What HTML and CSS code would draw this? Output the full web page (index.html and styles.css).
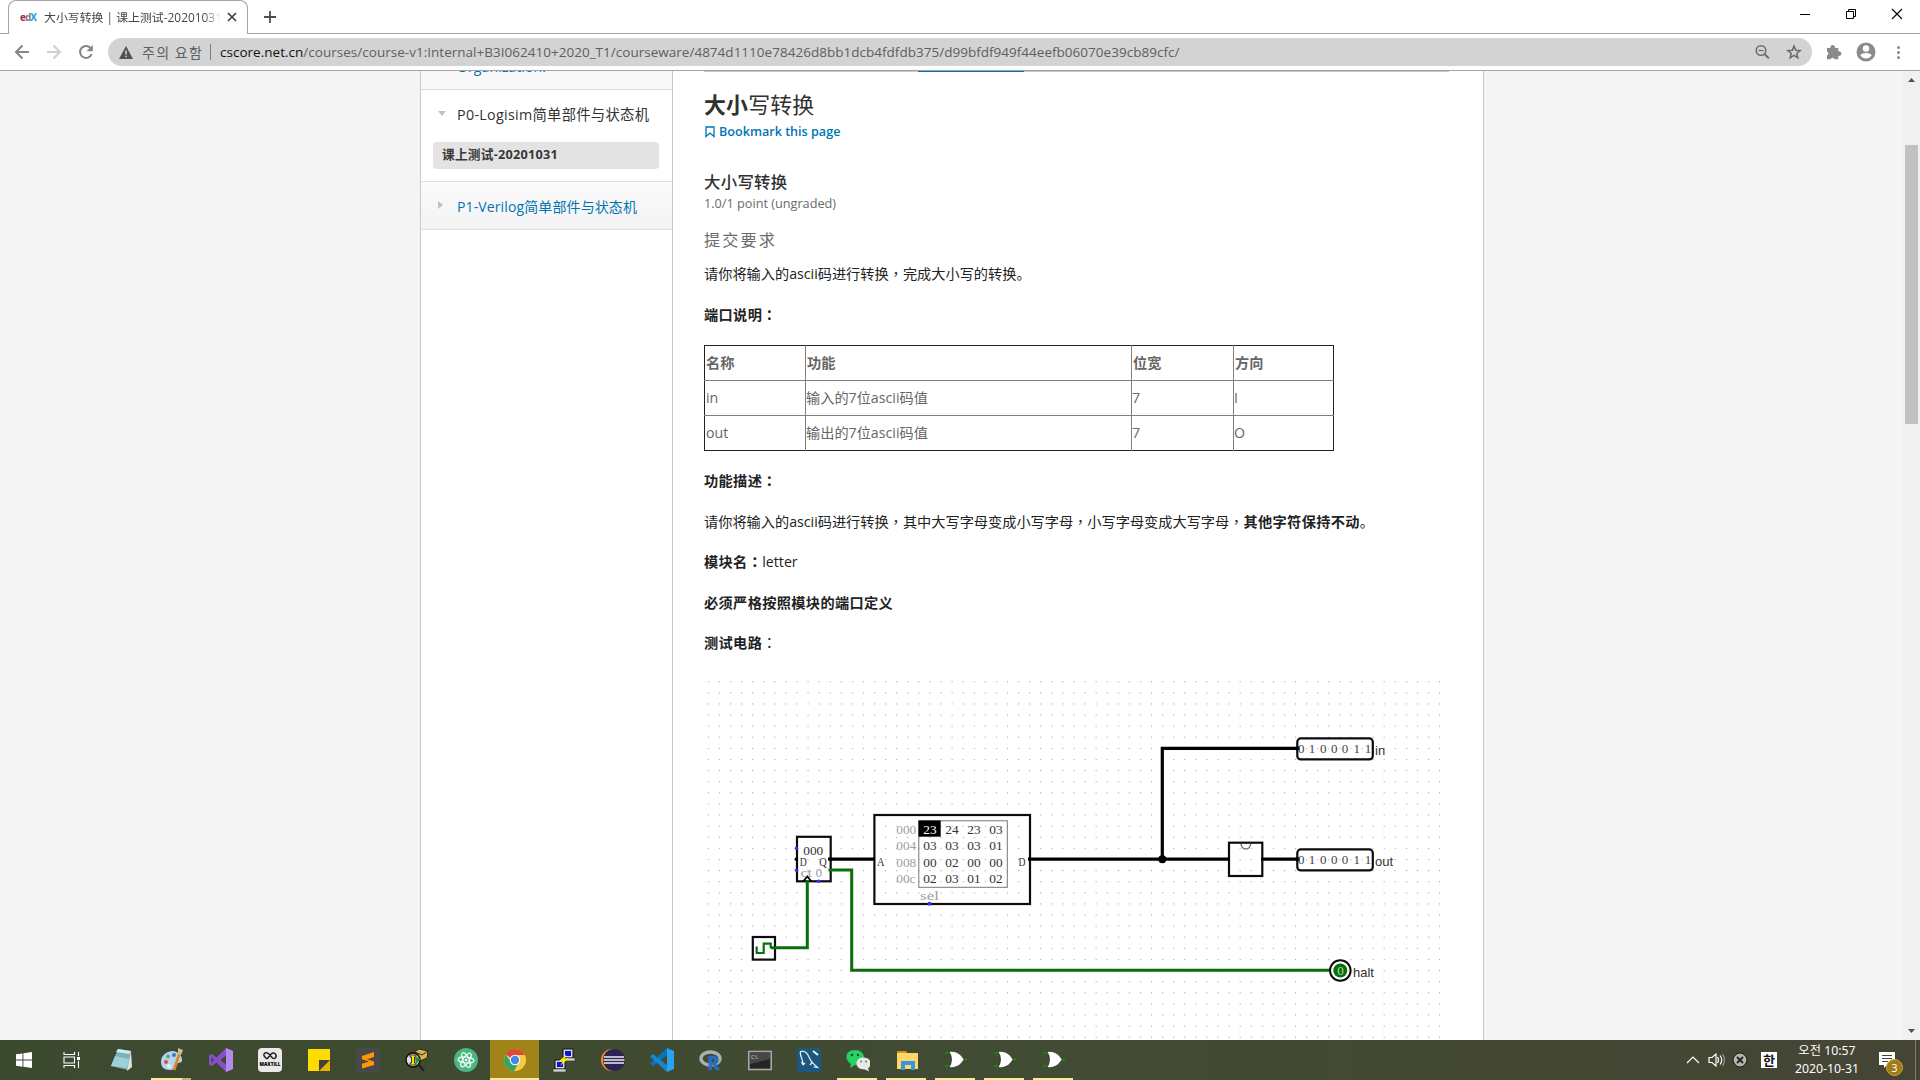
FILE: index.html
```html
<!DOCTYPE html>
<html lang="zh-CN">
<head>
<meta charset="utf-8">
<title>大小写转换 | 课上测试-20201031</title>
<link rel="stylesheet" href="styles.css">
</head>
<body>
<div class="screen">
<header class="tabstrip">
  <div class="tab">
    <div class="favicon"><b class="fe">e</b><b class="fd">d</b><b class="fx">X</b></div>
    <div class="tab-title">大小写转换 | 课上测试-20201031</div>
    <svg class="tab-close" width="10" height="10" viewBox="0 0 10 10"><path d="M1 1l8 8M9 1l-8 8" stroke="#3c4043" stroke-width="1.7"/></svg>
  </div>
  <svg class="newtab" width="14" height="14" viewBox="0 0 14 14"><path d="M7 1v12M1 7h12" stroke="#4c4f52" stroke-width="1.8"/></svg>
  <div class="winbtns">
    <svg width="46" height="28" viewBox="0 0 46 28"><path d="M18 14.5h10" stroke="#000"/></svg>
    <svg width="46" height="28" viewBox="0 0 46 28"><path d="M18.500 11.500h7v7h-7zM20.500 11v-1.500h7v7h-1.500" fill="none" stroke="#000"/></svg>
    <svg width="46" height="28" viewBox="0 0 46 28"><path d="M18 9l10 10M28 9l-10 10" stroke="#000" stroke-width="1.100"/></svg>
  </div>
</header>
<div class="toolbar">
  <svg class="nav" width="108" height="36" viewBox="0 0 108 36" fill="none" stroke-width="2">
    <path d="M29 18H16.500M22.500 11.500L16 18l6.500 6.500" stroke="#858585"/>
    <path d="M47 18h12.500M53.500 11.500L60 18l-6.500 6.500" stroke="#cfcfcf"/>
    <path d="M91 14.500A6 6 0 1 0 91.700 20" stroke="#858585"/><path d="M92.800 11v6.300h-6.300z" fill="#858585"/>
  </svg>
  <div class="omnibox">
    <svg class="warn" width="14" height="13" viewBox="0 0 14 13"><path d="M7 0l7 13H0z" fill="#4f5154"/><path d="M7 4.500v4M7 9.800v1.500" stroke="#d3d3d3" stroke-width="1.500"/></svg>
    <span class="insecure">주의 요함</span>
    <i class="sep"></i>
    <span class="url"><span class="host">cscore.net.cn</span>/courses/course-v1:Internal+B3I062410+2020_T1/courseware/4874d1110e78426d8bb1dcb4fdfdb375/d99bfdf949f44eefb06070e39cb89cfc/</span>
    <svg class="pillicons" width="60" height="28" viewBox="0 0 60 28" fill="none" stroke="#6b6b6b">
      <circle cx="9" cy="12.500" r="4.800" stroke-width="1.500"/><path d="M6.500 12.500h5" stroke-width="1.200"/><path d="M12.500 16l4.300 4.300" stroke-width="1.900"/>
      <path d="M42 8l1.700 4.200 4.500.3-3.500 2.900 1.200 4.400L42 17.400l-3.900 2.400 1.200-4.400-3.500-2.900 4.500-.3z" stroke-width="1.500"/>
    </svg>
  </div>
  <svg class="exticons" width="100" height="36" viewBox="0 0 100 36" fill="#8a8a8a">
    <path d="M15 14h3.500a2.300 2.300 0 1 1 4.300 0h3.500v3.500a2.300 2.300 0 1 1 0 4.300v3.500h-3.600a2.200 2.200 0 0 0-4.200 0H15v-3.700a2.200 2.200 0 0 0 0-4.100z"/>
    <path fill-rule="evenodd" d="M54 8.500a9.500 9.500 0 1 1 0 19a9.500 9.500 0 1 1 0-19zM54 11.300a3.200 3.200 0 1 0 0 6.400a3.200 3.200 0 1 0 0-6.400zM48.200 21.300c1.400 2 3.400 3.300 5.800 3.300s4.400-1.300 5.800-3.300c-.8-1.600-3.800-2.300-5.800-2.300s-5 .7-5.800 2.300z"/>
    <circle cx="86.500" cy="13.500" r="1.500"/><circle cx="86.500" cy="18.500" r="1.500"/><circle cx="86.500" cy="23.500" r="1.500"/>
  </svg>
</div>

<div class="viewport">
  <div class="page">
    <nav class="sidebar">
      <div class="chapter clipped"><span>Organization.</span></div>
      <div class="chapter open"><i class="arrow down"></i><span>P0-Logisim简单部件与状态机</span></div>
      <div class="section">课上测试-20201031</div>
      <div class="chapter closed"><i class="arrow right"></i><span>P1-Verilog简单部件与状态机</span></div>
    </nav>
    <main class="content">
      <div class="seqbar"><i></i></div>
      <h2><b>大小</b>写转换</h2>
      <div class="bookmark"><svg width="10" height="12" viewBox="0 0 10 12"><path d="M1 1h8v9.500L5 7 1 10.500z" fill="none" stroke="#0075b4" stroke-width="1.300"/></svg><span>Bookmark this page</span></div>
      <h3>大小写转换</h3>
      <div class="points">1.0/1 point (ungraded)</div>
      <h4>提交要求</h4>
      <p>请你将输入的ascii码进行转换<span class="pc" lang="zh-TW">，</span>完成大小写的转换。</p>
      <p><b>端口说明<span class="pc" lang="zh-TW">：</span></b></p>
      <table>
        <tr><th class="c1">名称</th><th class="c2">功能</th><th class="c3">位宽</th><th class="c4">方向</th></tr>
        <tr><td>in</td><td>输入的7位ascii码值</td><td>7</td><td>I</td></tr>
        <tr><td>out</td><td>输出的7位ascii码值</td><td>7</td><td>O</td></tr>
      </table>
      <p class="after-table"><b>功能描述<span class="pc" lang="zh-TW">：</span></b></p>
      <p>请你将输入的ascii码进行转换<span class="pc" lang="zh-TW">，</span>其中大写字母变成小写字母<span class="pc" lang="zh-TW">，</span>小写字母变成大写字母<span class="pc" lang="zh-TW">，</span><b>其他字符保持不动</b>。</p>
      <p><b>模块名<span class="pc" lang="zh-TW">：</span></b>letter</p>
      <p><b>必须严格按照模块的端口定义</b></p>
      <p><b>测试电路</b><span class="pc" lang="zh-TW">：</span></p>
      <svg class="circuit" width="740" height="368" viewBox="704 672 740 368">
        <defs><pattern id="grid" x="707.800" y="681.200" width="11.080" height="11.110" patternUnits="userSpaceOnUse"><rect width="1.100" height="1.100" fill="#a4a4a4"/></pattern></defs>
        <rect x="707" y="681" width="734" height="359" fill="url(#grid)"/>
        <g fill="none" stroke="#0c0c0e" stroke-width="2.200">
          <rect x="797" y="836.800" width="33.700" height="44.500"/>
          <rect x="752.800" y="937" width="22.200" height="22.600"/>
          <rect x="874.400" y="815" width="155.600" height="89"/>
          <rect x="1229" y="842.700" width="33.300" height="33.300"/>
          <rect x="1297.300" y="738.400" width="75.500" height="21" rx="3.500"/>
          <rect x="1297.300" y="849.400" width="75.500" height="21" rx="3.500"/>
        </g>
        <g fill="none" stroke="#000" stroke-width="3.200">
          <path d="M828 859.200h47"/><path d="M1028 859.200h202"/><path d="M1162.300 859.200V748.300H1298"/><path d="M1261 859.200h37"/>
        </g>
        <circle cx="1162.300" cy="859.200" r="4"/><circle cx="1297.500" cy="748.300" r="2.300"/><circle cx="1297.500" cy="859.200" r="2.300"/><circle cx="796.300" cy="859.300" r="1.700"/>
        <path d="M1241 844c1 6.500 8.700 6.500 9.700 0" fill="none" stroke="#777" stroke-width="1.500"/>
        <g fill="none" stroke="#0a6e0a" stroke-width="3">
          <path d="M770.700 947.700h36.600V880"/><path d="M828.500 870h23.200v100.200H1331"/>
          <path d="M756.700 946.500v6.500h7v-9.300h7v4.500" stroke-width="2.200"/>
        </g>
        <path d="M803.500 881l3.800-4.500 3.800 4.500" fill="none" stroke="#000" stroke-width="1.800"/>
        <g fill="#3030ff"><circle cx="796.500" cy="848.300" r="1.800"/><circle cx="796.500" cy="870.200" r="1.800"/><circle cx="818.700" cy="881.300" r="1.800"/><circle cx="929.500" cy="903.700" r="2"/></g>
        <rect x="918.800" y="820.800" width="88.500" height="66.500" fill="none" stroke="#777"/>
        <rect x="918.500" y="820.500" width="22.200" height="16.200"/>
        <g class="mono">
          <text x="803.300" y="854.700">000</text><text x="799.800" y="865.700" textLength="7" lengthAdjust="spacingAndGlyphs">D</text><text x="819.300" y="865.700" textLength="7.500" lengthAdjust="spacingAndGlyphs">Q</text>
          <text x="877" y="866.300" textLength="7.500" lengthAdjust="spacingAndGlyphs">A</text><text x="1018.600" y="866.300" textLength="7" lengthAdjust="spacingAndGlyphs">D</text>
          <text x="923.300" y="834" fill="#fff">23</text><text x="945.300" y="834">24</text><text x="967.300" y="834">23</text><text x="989.300" y="834">03</text>
          <text x="923.300" y="850.200">03</text><text x="945.300" y="850.200">03</text><text x="967.300" y="850.200">03</text><text x="989.300" y="850.200">01</text>
          <text x="923.300" y="866.600">00</text><text x="945.300" y="866.600">02</text><text x="967.300" y="866.600">00</text><text x="989.300" y="866.600">00</text>
          <text x="923.300" y="883.300">02</text><text x="945.300" y="883.300">03</text><text x="967.300" y="883.300">01</text><text x="989.300" y="883.300">02</text>
        </g>
        <g class="mono faint">
          <text x="896.300" y="834">000</text><text x="896.300" y="850.200">004</text><text x="896.300" y="866.600">008</text><text x="896.300" y="883.300">00c</text>
          <text x="920" y="900" textLength="19" lengthAdjust="spacingAndGlyphs">sel</text><text x="800.500" y="877" textLength="11.500" lengthAdjust="spacingAndGlyphs">ct</text><text x="815.600" y="877">0</text>
        </g>
        <g class="bits">
          <text x="1301.300 1312 1323.300 1334.300 1345 1356.700 1368" y="752.700">0100011</text>
          <text x="1301.300 1312 1323.300 1334.300 1345 1356.700 1368" y="863.700">0100011</text>
        </g>
        <circle cx="1340.300" cy="970.500" r="10.300" fill="#fff" stroke="#0c0c0e" stroke-width="2"/><circle cx="1340.300" cy="970.500" r="7" fill="#0a6e0a"/>
        <text class="zero" x="1340.600" y="975">0</text>
        <g class="pin"><text x="1375" y="754.700">in</text><text x="1375" y="865.700">out</text><text x="1353" y="976.700">halt</text></g>
      </svg>
    </main>
  </div>
  <div class="scrollbar"><svg width="17" height="17" viewBox="0 0 17 17"><path d="M5 11l3.500-4 3.500 4z" fill="#505050"/></svg><i class="thumb"></i><svg width="17" height="17" viewBox="0 0 17 17"><path d="M5 6l3.500 4L12 6z" fill="#505050"/></svg></div>
</div>

<footer class="taskbar">
  <div class="cell first"><svg viewBox="0 0 24 24"><path d="M4 6.300l6.500-.9v6.200H4zM11.400 5.200L20 4v7.600h-8.600zM4 12.500h6.500v6.200L4 17.800zM11.400 12.500H20V20l-8.600-1.200z" fill="#fff"/></svg></div>
  <div class="cell first"><svg viewBox="0 0 24 24" fill="none" stroke="#fff" stroke-width="1.100"><path d="M4 4v2.500h10.500V4M4 20v-2.500h10.500V20M4 9h10.500v6H4zM18.500 4v4M18.500 13v7"/><path d="M17 9h3v3h-3z" fill="#fff" stroke="none"/></svg></div>
  <div class="cell wide"><svg viewBox="0 0 24 24"><path d="M8 1l13 2-3 19-17-4z" fill="#75b3bf"/><path d="M8 1l13 2-1 3L6 4z" fill="#d7e8e8"/><path d="M5 8l14 3-2 9L1 18z" fill="#9dd1d7"/><path d="M21 3l1 16-5 4z" fill="#dfe5dd"/></svg></div>
  <div class="cell"><svg viewBox="0 0 24 24"><path d="M1 14C1 7 7 3 13 3c6 1 9 5 9 9s-5 2-6 4 0 6-6 6S1 19 1 14z" fill="#b5d5ed"/><circle cx="6" cy="14" r="2" fill="#d4504a"/><circle cx="8" cy="8.500" r="2" fill="#62ac68"/><circle cx="14" cy="7" r="2" fill="#3c77c7"/><circle cx="9" cy="18" r="2" fill="#eee"/><path d="M20 4L14 22" stroke="#d98632" stroke-width="2.800"/><path d="M18 0l5 2-2 5-3-1z" fill="#d6b98f"/></svg><i class="run short"></i></div>
  <div class="cell"><svg viewBox="0 0 24 24"><path fill-rule="evenodd" d="M17 0l7 3v18l-7 3L7.500 14.500 3 18l-3-1.500v-9L3 6l4.500 3.500zM17 7.500L11.500 12l5.500 4.500zM2.500 9v6L5 12z" fill="#8650c9"/><path d="M17 0l7 3v18l-7 3z" fill="#b58aed"/></svg></div>
  <div class="cell"><svg viewBox="0 0 24 24"><rect width="24" height="24" rx="4" fill="#e9e9e9"/><path d="M9 11L6.500 8.500q-1.500-2 .5-3.500 2-1 4 1l3.500 4q1.500 1.200 3-.3 1.500-2-.3-4-2-1.700-4 .3L9 11" fill="none" stroke="#222" stroke-width="1.500"/><text x="1.500" y="18" font-size="5.500" font-weight="900" textLength="21" lengthAdjust="spacingAndGlyphs">MAXTILL</text></svg></div>
  <div class="cell"><svg viewBox="0 0 24 24"><path d="M1 1h22v22H1z" fill="#ffdc00"/><path d="M12 12h11v11H12z" fill="#e8b300"/><path d="M12 12h11L12 23z" fill="#3f3f3f"/></svg></div>
  <div class="cell"><svg viewBox="0 0 24 24"><rect width="24" height="24" rx="2" fill="#484848"/><path d="M18 4v5l-7 2.200 7 2.300v3.500L6 20.500v-4.700l7-2.200-7-2.300V8z" fill="#ff9800"/></svg></div>
  <div class="cell"><svg viewBox="0 0 24 24"><path d="M9 4l5-3 9 2-1 7-7 3z" fill="#d9b451" stroke="#30270c"/><path d="M10 4l7 3 6-4" fill="none" stroke="#30270c"/><circle cx="8" cy="12" r="7" fill="#ddd" stroke="#111" stroke-width="1.500"/><path d="M5 7h6v2H9.500v6H11v2H5v-2h1.500V9H5z" fill="#ffe100" stroke="#111" stroke-width=".8"/><path d="M10 10q4-3 5 2l-4 4z" fill="#1e9140"/><path d="M14 17l5 6" stroke="#222" stroke-width="2.500"/></svg></div>
  <div class="cell"><svg viewBox="0 0 24 24"><circle cx="12" cy="12" r="12" fill="#4cb583"/><g fill="none" stroke="#e5fff2" stroke-width="1.200"><ellipse cx="12" cy="12" rx="3" ry="8" transform="rotate(-25 12 12)"/><ellipse cx="12" cy="12" rx="3" ry="8" transform="rotate(35 12 12)"/><ellipse cx="12" cy="12" rx="3" ry="8" transform="rotate(95 12 12)"/></g><circle cx="12" cy="12" r="1.300" fill="#fff"/></svg></div>
  <div class="cell active"><svg viewBox="0 0 24 24"><circle cx="12" cy="12" r="11" fill="#f8cc3f"/><path d="M12 12L2.500 6.500A11 11 0 0 1 21.800 7H12z" fill="#dc493b"/><path d="M2.500 6.500A11 11 0 0 0 11 23l5-9-8 0z" fill="#31a565"/><circle cx="12" cy="12" r="5.200" fill="#fff"/><circle cx="12" cy="12" r="4.200" fill="#4386f4"/></svg><i class="run full"></i></div>
  <div class="cell"><svg viewBox="0 0 24 24"><path d="M11 1h10v9H11zM3 12h10v9H3z" fill="#d9d9d0" stroke="#111"/><path d="M13 3h6v5h-6zM5 14h6v5H5z" fill="#0710e6"/><path d="M10 10h13v3H12zM1 21h13v3H1z" fill="#d5d5cc" stroke="#222" stroke-width=".6"/><path d="M15 6L6 14l5-1-3 5 9-8-5 1z" fill="#ffeb00"/></svg></div>
  <div class="cell"><svg viewBox="0 0 24 24"><circle cx="11" cy="12" r="11" fill="#f2921d"/><circle cx="13" cy="12" r="11" fill="#2c2255"/><path d="M3 9h20M2.500 12h21M3 15h20" stroke="#eee" stroke-width="1.600"/></svg></div>
  <div class="cell"><svg viewBox="0 0 24 24"><path d="M17 0v7L3 18l-3-2.500z" fill="#0874ba"/><path d="M17 24v-7L3 6 0 8.500z" fill="#1687cf"/><path d="M17 0l7 3v18l-7 3z" fill="#29a3f0"/></svg></div>
  <div class="cell"><svg viewBox="0 0 24 24"><ellipse cx="11.500" cy="10.500" rx="9.500" ry="6.500" fill="none" stroke="#a9afb4" stroke-width="3.400"/><text x="8" y="22" font-size="19" font-weight="900" fill="#276dc2">R</text></svg></div>
  <div class="cell"><svg viewBox="0 0 24 24"><rect x=".8" y="3.500" width="22.400" height="18" fill="#242424" stroke="#aaa" stroke-width="1.600"/><path d="M2 5h20v6L2 16z" fill="#474747"/><text x="3" y="11" font-size="5" fill="#ddd">C:\.</text></svg></div>
  <div class="cell"><svg viewBox="0 0 24 24"><rect width="24" height="24" rx="3" fill="#1c577e"/><path d="M6 17C7 12 2 8 3.500 3.500c4-1.500 7.500 2 9 6.500s4 5.500 8 9.500l-4-.5M6 17l-1.500-3M6 17l2-2M13 17l2.500-3" fill="none" stroke="#e6f0f5" stroke-width="1.200"/><path d="M16 3l5 4" stroke="#e6f0f5" stroke-width="2"/></svg></div>
  <div class="cell"><svg viewBox="0 0 24 24"><path d="M9 2c5 0 9 3 9 7.500S14 17 9 17l-5 3 1-4C-2 12-1 2 9 2z" fill="#22d365"/><circle cx="6" cy="7" r="1.200" fill="#164d29"/><circle cx="12" cy="7" r="1.200" fill="#164d29"/><path d="M17 9.500c9 0 9 8 5 11l1 3-4-2c-12 0-10-12-2-12z" fill="#e8e8e8"/><circle cx="15" cy="13.500" r="1" fill="#777"/><circle cx="20" cy="13.500" r="1" fill="#777"/></svg><i class="run"></i></div>
  <div class="cell"><svg viewBox="0 0 24 24"><path d="M2 3h9l2 3H2z" fill="#dc9709"/><path d="M2 5h21v16H2z" fill="#ffd667"/><path d="M6 13h14v9h-4v-5h-6v5H6z" fill="#3795e3"/></svg><i class="run"></i></div>
  <div class="cell"><svg viewBox="0 0 24 24"><path d="M1 5h6M1 18h6M18 11.500h5" stroke="#07970b" stroke-width="1.500"/><path d="M5 3.500c7-1 12 2.500 15 8C17 17 12 20.500 5 19.500q5-8 0-16z" fill="#fff" stroke="#222" stroke-width=".7"/></svg><i class="run"></i></div>
  <div class="cell"><svg viewBox="0 0 24 24"><path d="M1 5h6M1 18h6M18 11.500h5" stroke="#07970b" stroke-width="1.500"/><path d="M5 3.500c7-1 12 2.500 15 8C17 17 12 20.500 5 19.500q5-8 0-16z" fill="#fff" stroke="#222" stroke-width=".7"/></svg><i class="run"></i></div>
  <div class="cell"><svg viewBox="0 0 24 24"><path d="M1 5h6M1 18h6M18 11.500h5" stroke="#07970b" stroke-width="1.500"/><path d="M5 3.500c7-1 12 2.500 15 8C17 17 12 20.500 5 19.500q5-8 0-16z" fill="#fff" stroke="#222" stroke-width=".7"/></svg><i class="run"></i></div>
  <div class="tray">
    <svg class="trayicons" width="72" height="40" viewBox="1684 0 72 40" fill="none" stroke="#fff" stroke-width="1.200"><path d="M1687 23l6-6 6 6"/><path d="M1709 17.500h3l4-3.500v12l-4-3.500h-3zM1717.500 17q2 3 0 6M1720 15.500q3.500 4.500 0 9"/><path d="M1722.500 14q4 6 0 12" stroke="#999"/><circle cx="1740" cy="20" r="7" fill="#b5b5b0" stroke="#222"/><path d="M1737 17l6 6M1743 17l-6 6" stroke="#222" stroke-width="1.800"/></svg>
    <span class="ime">한</span>
    <div class="clock"><span>오전 10:57</span><span>2020-10-31</span></div>
    <div class="notif"><svg width="18" height="18" viewBox="0 0 18 18"><path d="M1 1h16v13H9l-3 3v-3H1z" fill="#fff"/><path d="M4 4.500h10M4 7.500h10M4 10.500h6" stroke="#454636" stroke-width="1.100"/></svg><span class="badge">3</span></div>
    <i class="peek"></i>
  </div>
</footer>
</div>
</body>
</html>
```
FILE: styles.css
```css
* { box-sizing: border-box; }
body { margin: 0; overflow: hidden; font-family: "Open Sans", "Noto Sans CJK SC", sans-serif; }
svg { display: block; flex: none; }
.screen { width: 1920px; height: 1080px; display: flex; flex-direction: column; background: #fff; overflow: hidden; }

.tabstrip { height: 34px; flex: none; display: flex; border-bottom: 1px solid #a3a3a3; padding-left: 8px; }
.tab { width: 240px; height: 34px; border: 1px solid #a3a3a3; border-bottom: 0; border-radius: 8px 8px 0 0; background: #fff; display: flex; align-items: center; padding: 2px 10px 3px 11px; }
.favicon { width: 16px; margin-right: 8px; font-size: 10px; letter-spacing: -1px; line-height: 14px; display: flex; }
.fe { color: #b0205f; }
.fd { color: #777b7f; }
.fx { color: #1a9bd8; }
.tab-title { width: 177px; font-family: "Open Sans", "Noto Sans CJK SC", sans-serif; font-size: 11.900px; line-height: 18px; color: #44474a; white-space: nowrap; overflow: hidden; -webkit-mask-image: linear-gradient(90deg, #000 160px, transparent 177px); mask-image: linear-gradient(90deg, #000 160px, transparent 177px); }
.tab-close { margin-left: 6px; }
.newtab { margin: 10px 0 0 15px; }
.winbtns { margin-left: auto; display: flex; }

.toolbar { height: 37px; flex: none; display: flex; align-items: center; border-bottom: 1px solid #a3a3a3; }
.omnibox { width: 1704px; height: 28px; border-radius: 14px; background: #d3d3d3; display: flex; align-items: center; padding-left: 11px; color: #5c5f63; }
.warn { margin-right: 9px; }
.insecure { width: 62px; font-family: "Noto Sans CJK KR", sans-serif; font-size: 14px; letter-spacing: 1.300px; line-height: 24px; white-space: nowrap; }
.sep { width: 1px; height: 16px; background: #808080; margin: 0 9px 0 6px; }
.url { font-size: 13.500px; letter-spacing: .020px; line-height: 24px; white-space: nowrap; width: 965px; }
.host { color: #111; }
.pillicons { margin: 0 0 0 auto; }

.viewport { height: 969px; flex: none; background: #f4f4f4; display: flex; justify-content: space-between; overflow: hidden; }
.page { width: 1064px; margin-left: 420px; background: #fff; border: solid #c8c8c8; border-width: 0 1px; display: flex; }
.sidebar { width: 252px; border-right: 1px solid #c8c8c8; font-size: 14px; }
.chapter { display: flex; align-items: center; white-space: nowrap; color: #0075b4; }
.clipped { height: 19px; background: #f8f8f8; border-bottom: 1px solid #ddd; padding-left: 36px; }
.clipped span { line-height: 20px; margin-top: -26px; letter-spacing: .1px; }
.open { height: 52px; color: #313131; padding: 0 0 5px 17px; font-size: 14.300px; letter-spacing: .3px; }
.section { width: 226px; height: 27px; margin: 0 0 12px 12px; padding-left: 9px; background: #e3e3e3; border-radius: 4px; font-size: 12.700px; letter-spacing: .250px; line-height: 25px; font-weight: 700; color: #383838; }
.closed { height: 49px; background: linear-gradient(#fbfbfb, #f3f3f3); border: solid #ddd; border-width: 1px 0; padding-left: 17px; letter-spacing: .120px; }
.arrow { width: 19px; }
.arrow::before { content: ""; display: block; width: 0; border: 4px solid transparent; }
.down::before { border-top: 5px solid #c2c2c2; border-bottom: 0; margin-top: -1px; }
.right::before { border-left: 5px solid #c2c2c2; border-right: 0; margin-top: -2px; }

.content { width: 810px; padding-left: 31px; color: #222; font-size: 14.200px; line-height: 20px; white-space: nowrap; }
.seqbar { width: 745px; height: 1px; background: #c8c8c8; padding-left: 214px; }
.seqbar i { display: block; width: 106px; height: 1px; background: #0075b4; }
h2, h3, h4, p { margin: 0; }
h2 { margin-top: 18px; height: 30px; font-size: 21.900px; letter-spacing: .2px; line-height: 30px; font-weight: 400; color: #313131; }
.bookmark { margin-top: 2px; height: 20px; display: flex; align-items: center; gap: 4px; padding-left: 1px; color: #0075b4; font-size: 12.600px; font-weight: 600; }
h3 { margin-top: 30px; font-size: 16.400px; letter-spacing: .3px; font-weight: 500; line-height: 20px; color: #313131; }
.points { margin-top: 2px; height: 18px; line-height: 18px; font-size: 12.700px; color: #6b6b6b; }
h4 { margin: 18px 0 14px; font-size: 16.200px; line-height: 20px; letter-spacing: 2.100px; font-weight: 400; color: #6b6b6b; }
p { height: 20px; margin-bottom: 20.500px; }
p b { letter-spacing: .36px; }
.pc { font-family: "Noto Sans CJK TC", sans-serif; line-height: 1; }
table { border-collapse: collapse; border: 1px solid #222; table-layout: fixed; width: 630px; color: #666; }
th, td { height: 35px; padding: 0 0 0 1px; text-align: left; border: 0; }
tr + tr > * { border-top: 1px solid #808080; }
th + th, td + td { border-left: 1px solid #808080; }
td + td { padding-left: 0; }
.c1 { width: 101px; }
.c2 { width: 326px; }
.c3 { width: 102px; }
.c4 { width: 100px; }
.after-table { margin-top: 20px; }
.circuit { margin-top: -2px; }

.mono { font-family: "Liberation Serif", serif; font-size: 13.300px; fill: #333; }
.mono [fill="#fff"] { fill: #fff; }
.faint { fill: #a0a0a0; }
.bits { font-family: "Liberation Serif", serif; font-size: 13px; fill: #444; text-anchor: middle; }
.pin { font-family: "Liberation Sans", sans-serif; font-size: 13px; fill: #333; }
.zero { font-family: "Liberation Serif", serif; font-size: 13px; fill: #b9dcb9; text-anchor: middle; }

.scrollbar { width: 17px; background: #f0f0f0; display: flex; flex-direction: column; }
.thumb { width: 13px; height: 279px; margin: 57px 0 auto 2px; background: #c1c1c1; }

.taskbar { height: 40px; flex: none; display: flex; background: linear-gradient(90deg, #3c4a2f, #424b33 55%, #454535); }
.cell { width: 49px; height: 40px; display: flex; align-items: center; justify-content: center; position: relative; }
.cell svg { width: 24px; height: 24px; }
.cell.first { width: 48px; }
.cell.wide { width: 51px; }
.cell.active { background: #a08319; }
.run { position: absolute; left: 4px; bottom: 0; width: 40px; height: 2px; background: #ffe7a0; }
.run.short { border-right: 9px solid #c9b07a; }
.run.full { left: 0; width: 49px; }
.tray { margin-left: auto; display: flex; align-items: center; width: 236px; color: #fff; }
.ime { margin-left: 5px; width: 16px; height: 16px; background: #fff; color: #111; font: 700 13px/15px "Noto Sans CJK KR", sans-serif; text-align: center; }
.clock { width: 100px; display: flex; flex-direction: column; align-items: center; font: 12.300px/18px "Noto Sans", "Noto Sans CJK KR", sans-serif; }
.notif { position: relative; width: 38px; height: 18px; margin-left: 1px; }
.badge { position: absolute; left: 8px; top: 8px; width: 17px; height: 17px; border-radius: 50%; background: #a17b14; border: 1px solid #c6a451; font-size: 11px; line-height: 15px; text-align: center; }
.peek { width: 1px; height: 40px; background: #7d7e72; margin-left: -1px; }
```
